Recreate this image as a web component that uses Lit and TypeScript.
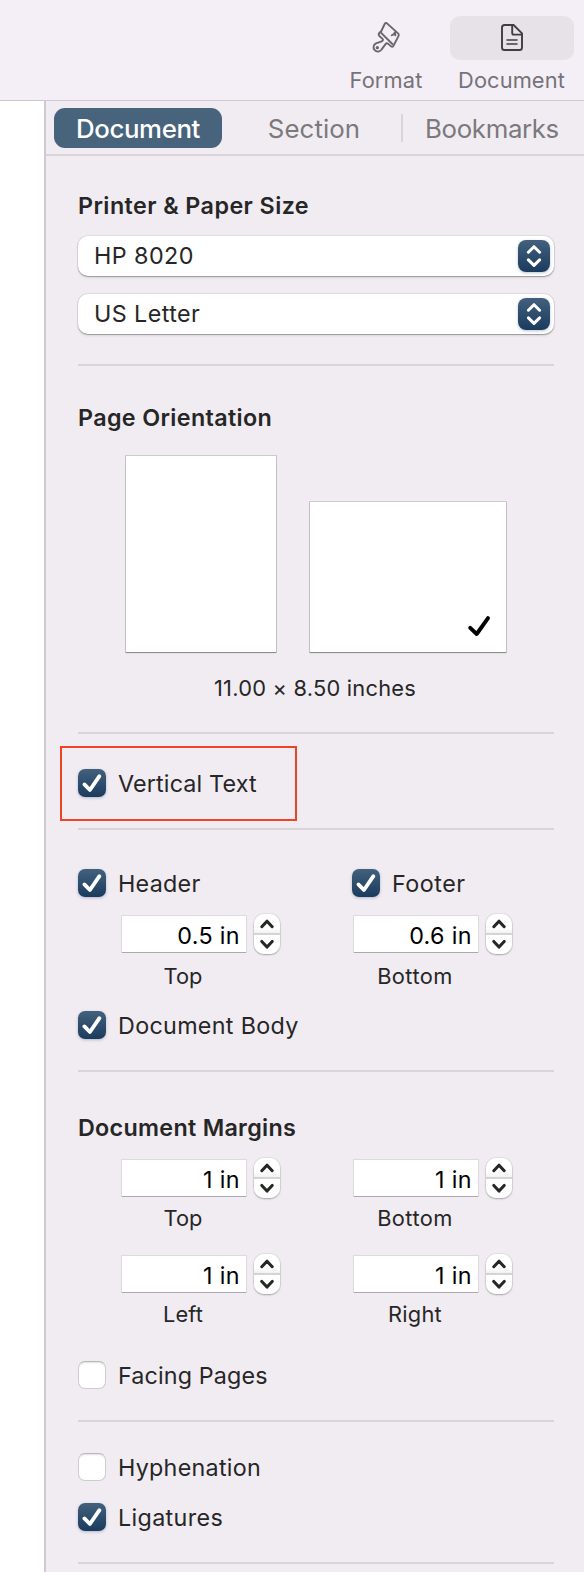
import { LitElement, html, css, svg } from "lit";
import { customElement, property } from "lit/decorators.js";
import { classMap } from "lit/directives/class-map.js";

/* Text run with optional tracking, in px. */
const run = (text: string, tracking: number) =>
  html`<span style="letter-spacing:${tracking}px">${text}</span>`;

@customElement("check-box")
class CheckBox extends LitElement {
  @property() label = "";
  @property({ type: Boolean }) checked = false;
  @property({ type: Number }) tracking = 0.35;

  static styles = css`
    :host { display: flex; align-items: center; gap: 12px; height: 28px; }
    .box {
      width: 28px; height: 28px; box-sizing: border-box; border-radius: 7px;
      background: #fff; border: 1px solid #cfcbd0; border-top-color: #b9b5ba;
      box-shadow: inset 0 2px 2px -1px rgba(0, 0, 0, 0.12);
      flex: none;
    }
    .box.on {
      border: 0; background: linear-gradient(#43617d, #1b3b5e);
      box-shadow: 0 1px 3px rgba(40, 60, 110, 0.3);
    }
    svg { display: block; }
    .label { line-height: 28px; padding-top: 1px; white-space: pre; }
  `;

  render() {
    return html`
      <div class=${classMap({ box: true, on: this.checked })}>
        ${this.checked
          ? html`<svg width="28" height="28" viewBox="0 0 28 28" fill="none" stroke="#fff" stroke-width="3.8" stroke-linecap="round" stroke-linejoin="round"><path d="M6.4 15.4 11.9 21 21.4 7.2"/></svg>`
          : ""}
      </div>
      <div class="label">${run(this.label, this.tracking)}</div>`;
  }
}

@customElement("popup-button")
class PopupButton extends LitElement {
  @property() label = "";
  @property({ type: Number }) tracking = 0.4;

  static styles = css`
    :host {
      display: flex; align-items: center; justify-content: space-between;
      height: 40px; padding: 0 4px 0 16px; box-sizing: border-box;
      border-radius: 10px; background: #fff;
      box-shadow: 0 0 0 1px rgba(0, 0, 0, 0.07), 0 1px 1px rgba(0, 0, 0, 0.24), 0 2px 3px rgba(0, 0, 0, 0.08);
    }
    .label { line-height: 40px; margin-top: -1px; }
    .arrows {
      width: 32px; height: 32px; border-radius: 8px;
      background: linear-gradient(#43617d, #1b3b5e);
      box-shadow: 0 1px 3px rgba(20, 60, 100, 0.3);
    }
    svg { display: block; }
  `;

  render() {
    return html`
      <div class="label">${run(this.label, this.tracking)}</div>
      <div class="arrows">
        <svg width="32" height="32" viewBox="0 0 32 32" fill="none" stroke="#fff" stroke-width="3" stroke-linecap="round" stroke-linejoin="round">
          <path d="M10.4 12.2 16 6.7 21.6 12.2M10.4 19.9 16 25.4 21.6 19.9"/>
        </svg>
      </div>`;
  }
}

@customElement("stepper-field")
class StepperField extends LitElement {
  @property() value = "";
  @property() label = "";
  @property({ type: Number }) tracking = 0.1;
  @property({ type: Number }) valueTracking = 0.37;

  static styles = css`
    :host {
      display: grid; grid-template-columns: 124px 26px; column-gap: 8px;
      align-items: center; justify-items: center;
    }
    .value {
      width: 124px; height: 36px; box-sizing: border-box; padding-right: 6px;
      background: #fff; color: #000; text-align: right; line-height: 39px;
      box-shadow: 0 0 0 1px rgba(0, 0, 0, 0.08), 0 1px 0 rgba(0, 0, 0, 0.22);
    }
    .stepper {
      width: 26px; height: 40px; border-radius: 10px;
      background: linear-gradient(#fff 35%, #f3f2f3 47%, #d5d3d5 48%, #d5d3d5 52%, #fff 53%);
      box-shadow: 0 0 0 1px rgba(0, 0, 0, 0.05), 0 1px 2px rgba(0, 0, 0, 0.28);
    }
    svg { display: block; }
    .label { font-size: 21.8px; line-height: 28px; margin-top: var(--label-gap, 6px); padding-right: 2px; }
  `;

  render() {
    return html`
      <div class="value">${run(this.value, this.valueTracking)}</div>
      <div class="stepper">
        <svg width="26" height="40" viewBox="0 0 26 40" fill="none" stroke="#262626" stroke-width="3.1" stroke-linecap="round" stroke-linejoin="round">
          <path d="M7.8 12.7 13 7.2 18.2 12.7M7.8 27.5 13 33 18.2 27.5"/>
        </svg>
      </div>
      <div class="label">${run(this.label, this.tracking)}</div>`;
  }
}

const brush = svg`
  <path d="M63 28 97 59Q100 63 97 67L82 96Q79 100 75 97L66 89Q62 86 58 91L47 106A13 13 0 1 1 30 88L47 82Q54 78 49 74L40 66Q36 61 40 57L46 51 56 30Q59 25 63 28Z"/>
  <path d="M44 55 79 90M77 64Q84 62 87 55L88 64" />
  <circle cx="34" cy="101" r="2.2"/>`;

@customElement("app-root")
class AppRoot extends LitElement {
  static styles = css`
    :host {
      display: flex; flex-direction: column; width: 584px; height: 1572px; overflow: hidden;
      background: #fff; color: #262626;
      font-family: Inter, "Liberation Sans", sans-serif; font-size: 23.3px;
    }
    svg { display: block; }

    .toolbar {
      display: flex; justify-content: flex-end; height: 101px; flex: none;
      background: #f4eef6; border-bottom: 1px solid #cdc8d0;
      padding: 16px 10px 0 0; box-sizing: border-box;
      color: #757376; font-size: 21.8px;
    }
    .tool { display: flex; flex-direction: column; align-items: center; width: 124px; }
    .tool .well {
      display: flex; justify-content: center; align-items: flex-start;
      width: 100%; height: 44px; border-radius: 10px;
    }
    .tool.selected .well { background: #e6e2e8; }
    .tool .name { line-height: 28px; margin-top: 6px; }
    .tool.format { margin-right: 2px; }
    .tool.format .well { padding-left: 4px; box-sizing: border-box; }
    .tool.selected .name { padding-right: 1px; }

    .body { display: flex; flex: 1; min-height: 0; }
    .page-edge { width: 44px; flex: none; background: #fff; }
    .sidebar {
      flex: 1; display: flex; flex-direction: column;
      background: #f1ecf2; border-left: 2px solid #cfcad2;
    }

    .tabs {
      display: flex; align-items: center; height: 53px; flex: none;
      padding-left: 8px; border-bottom: 2px solid #d8d4da;
      color: #7b797c; font-size: 25.8px;
    }
    .tab { text-align: center; height: 40px; line-height: 42px; }
    .tab.current { width: 168px; border-radius: 11px; background: #48637c; color: #fff; font-weight: 500; }
    .tab.section { width: 174px; margin-left: 5px; }
    .tab.bookmarks { width: 178px; }
    .rule { width: 2px; height: 28px; background: #d8d4da; }

    .content { display: flex; flex-direction: column; padding: 0 30px 0 32px; }
    hr { width: 100%; height: 2px; margin: 0; border: 0; background: #d8d5dc; flex: none; }
    h2 { margin: 0; font-size: 23.3px; font-weight: 600; line-height: 30px; white-space: pre; }

    .printer { display: flex; flex-direction: column; padding: 35px 0 30px; }
    .popups { display: flex; flex-direction: column; gap: 18px; margin-top: 15px; }

    .orientation { padding: 37px 0 29px; }
    .pages { display: flex; align-items: flex-end; gap: 34px; padding-left: 48px; margin-top: 23px; }
    .sheet {
      display: flex; justify-content: flex-end; align-items: flex-end; box-sizing: border-box;
      background: #fff;
      box-shadow: 0 0 0 1px rgba(0, 0, 0, 0.14), 0 1px 1px rgba(0, 0, 0, 0.3);
    }
    .portrait { width: 150px; height: 196px; }
    .landscape { width: 196px; height: 150px; padding: 0 15px 15px 0; }
    .dimensions { margin-top: 21px; padding-right: 2px; line-height: 30px; font-size: 21.8px; text-align: center; }

    .vertical { position: relative; padding: 35px 0 31px; }
    .highlight {
      position: absolute; left: -18px; top: 12px; width: 237px; height: 75px;
      box-sizing: border-box; border: 2px solid #ee4327;
    }

    .header-footer { padding: 39px 0 31px; }
    .toggles { display: grid; grid-template-columns: 274px 1fr; }
    .fields { display: grid; grid-template-columns: 232px 1fr; padding-left: 44px; row-gap: 22px; }
    .header-footer .fields { margin: 17px 0 21px; --label-gap: 8px; }
    .margins { padding: 41px 0 31px; }
    .margins .fields { margin: 15px 0 33px; }
    .typography { display: flex; flex-direction: column; gap: 22px; padding: 31px 0; }
  `;

  render() {
    return html`
      <div class="toolbar">
        <div class="tool format">
          <div class="well">
            <svg width="44" height="44" viewBox="0 6 132 132" fill="none" stroke="#68656b" stroke-width="5.6" stroke-linejoin="round" stroke-linecap="round">${brush}</svg>
          </div>
          <div class="name">${run("Format", 0.15)}</div>
        </div>
        <div class="tool selected">
          <div class="well">
            <svg width="24" height="44" viewBox="0 0 24 44" fill="none" stroke="#3f3c42" stroke-width="1.9" stroke-linejoin="round" stroke-linecap="round">
              <path d="M4.6 9H13.6L22 17.4V31.4Q22 34 19.4 34H4.6Q2 34 2 31.4V11.6Q2 9 4.6 9Z"/>
              <path d="M12.2 9.3V17Q12.2 18.6 13.8 18.6H21.6"/>
              <path d="M7 24H17M7 28.1H17" stroke-width="1.5"/>
            </svg>
          </div>
          <div class="name">${run("Document", 0.1)}</div>
        </div>
      </div>

      <div class="body">
        <div class="page-edge"></div>
        <div class="sidebar">
          <div class="tabs">
            <div class="tab current">${run("Document", -0.4)}</div>
            <div class="tab section">${run("Section", 0.1)}</div>
            <div class="rule"></div>
            <div class="tab bookmarks">${run("Bookmarks", -0.35)}</div>
          </div>

          <div class="content">
            <section class="printer">
              <h2>${run("Printer & Paper Size", 0.43)}</h2>
              <div class="popups">
                <popup-button label="HP 8020" tracking="0.43"></popup-button>
                <popup-button label="US Letter" tracking="0.423"></popup-button>
              </div>
            </section>
            <hr />
            <section class="orientation">
              <h2>${run("Page Orientation", 0.357)}</h2>
              <div class="pages">
                <div class="sheet portrait"></div>
                <div class="sheet landscape">
                  <svg width="24" height="22" viewBox="0 0 24 22" fill="none" stroke="#000" stroke-width="3.9" stroke-linecap="round" stroke-linejoin="round"><path d="M3.2 12.9 9.7 19 21 3.1"/></svg>
                </div>
              </div>
              <div class="dimensions">${run("11.00 × 8.50 inches", 0.24)}</div>
            </section>
            <hr />
            <section class="vertical">
              <check-box label="Vertical Text" tracking="0.16" checked></check-box>
              <div class="highlight"></div>
            </section>
            <hr />
            <section class="header-footer">
              <div class="toggles">
                <check-box label="Header" tracking="0.27" checked></check-box>
                <check-box label="Footer" tracking="0.5" checked></check-box>
              </div>
              <div class="fields">
                <stepper-field value="0.5 in" label="Top"></stepper-field>
                <stepper-field value="0.6 in" label="Bottom" tracking="0.45"></stepper-field>
              </div>
              <check-box label="Document Body" tracking="0.32" checked></check-box>
            </section>
            <hr />
            <section class="margins">
              <h2>${run("Document Margins", 0.3)}</h2>
              <div class="fields">
                <stepper-field value="1 in" .valueTracking=${0.4} label="Top"></stepper-field>
                <stepper-field value="1 in" .valueTracking=${0.4} label="Bottom" tracking="0.45"></stepper-field>
                <stepper-field value="1 in" .valueTracking=${0.4} label="Left"></stepper-field>
                <stepper-field value="1 in" .valueTracking=${0.4} label="Right" tracking="0.25"></stepper-field>
              </div>
              <check-box label="Facing Pages" tracking="0.14"></check-box>
            </section>
            <hr />
            <section class="typography">
              <check-box label="Hyphenation" tracking="0.27"></check-box>
              <check-box label="Ligatures" tracking="0.36" checked></check-box>
            </section>
            <hr />
          </div>
        </div>
      </div>`;
  }
}
